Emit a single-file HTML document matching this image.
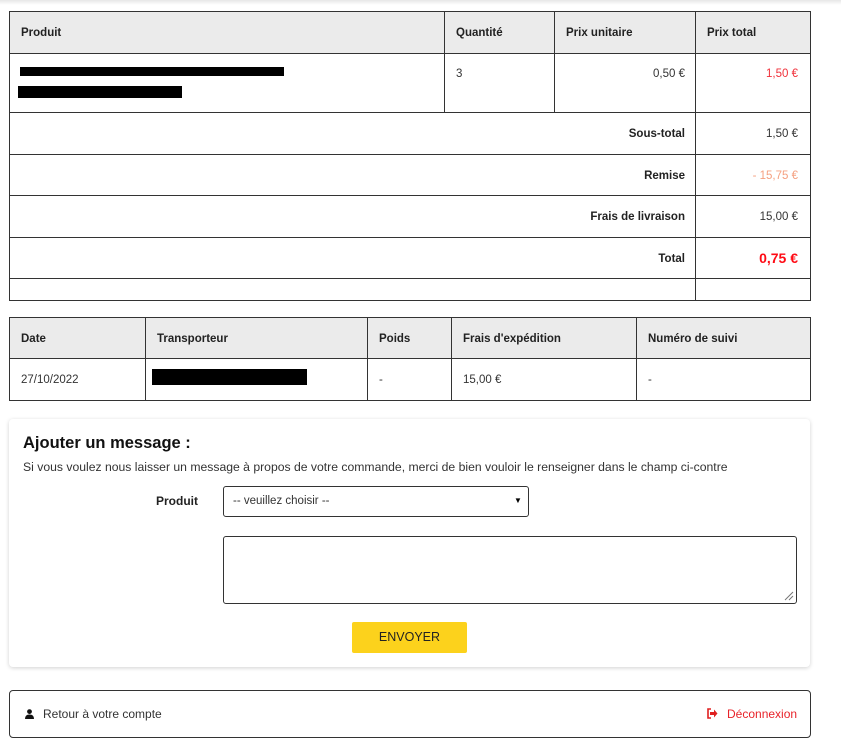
<!DOCTYPE html>
<html><head><meta charset="utf-8"><style>
*{box-sizing:border-box;margin:0;padding:0}
body{width:841px;height:750px;background:#fff;font-family:"Liberation Sans",Arial,sans-serif;font-size:11.5px;color:#333;position:relative;overflow:hidden}
.a{position:absolute}
.b{border:1px solid #333}
.hd{background:#ebebeb}
.bold{font-weight:bold;color:#222}
.vl{position:absolute;width:1px;background:#333}
.hl{position:absolute;height:1px;background:#333}
.blk{position:absolute;background:#000}
.t{margin-top:2px}
</style></head><body>
<div class="a" style="left:0;top:0;width:841px;height:5px;background:linear-gradient(#e6e6e6,#fff)"></div>

<div class="a b" style="left:9px;top:11px;width:802px;height:290px"></div>
<div class="a hd" style="left:10px;top:12px;width:800px;height:41px"></div>
<div class="hl" style="left:9px;top:53px;width:802px"></div>
<div class="hl" style="left:9px;top:112px;width:802px"></div>
<div class="hl" style="left:9px;top:154px;width:802px"></div>
<div class="hl" style="left:9px;top:195px;width:802px"></div>
<div class="hl" style="left:9px;top:237px;width:802px"></div>
<div class="hl" style="left:9px;top:278px;width:802px"></div>
<div class="vl" style="left:444px;top:11px;height:102px"></div>
<div class="vl" style="left:554px;top:11px;height:102px"></div>
<div class="vl" style="left:695px;top:11px;height:290px"></div>
<div class="a bold" style="left:21px;top:27px">Produit</div>
<div class="a bold" style="left:456px;top:27px">Quantité</div>
<div class="a bold" style="left:566px;top:27px">Prix unitaire</div>
<div class="a bold" style="left:707px;top:27px">Prix total</div>
<div class="blk" style="left:20px;top:67px;width:264px;height:9px"></div>
<div class="blk" style="left:18px;top:86px;width:164px;height:12px"></div>
<div class="a" style="left:456px;top:68px">3</div>
<div class="a" style="left:560px;top:68px;width:125px;text-align:right">0,50 €</div>
<div class="a" style="left:700px;top:68px;width:98px;text-align:right;color:#f0303a">1,50 €</div>
<div class="a bold" style="left:400px;top:128px;width:285px;text-align:right">Sous-total</div>
<div class="a" style="left:700px;top:128px;width:98px;text-align:right">1,50 €</div>
<div class="a bold" style="left:400px;top:170px;width:285px;text-align:right">Remise</div>
<div class="a" style="left:700px;top:170px;width:98px;text-align:right;color:#f5a080">- 15,75 €</div>
<div class="a bold" style="left:400px;top:211px;width:285px;text-align:right">Frais de livraison</div>
<div class="a" style="left:700px;top:211px;width:98px;text-align:right">15,00 €</div>
<div class="a bold" style="left:400px;top:253px;width:285px;text-align:right">Total</div>
<div class="a" style="left:700px;top:250px;width:98px;text-align:right;color:#ff0a14;font-weight:bold;font-size:14px">0,75 €</div>

<div class="a b" style="left:9px;top:317px;width:802px;height:84px"></div>
<div class="a hd" style="left:10px;top:318px;width:800px;height:40px"></div>
<div class="hl" style="left:9px;top:358px;width:802px"></div>
<div class="vl" style="left:145px;top:317px;height:84px"></div>
<div class="vl" style="left:367px;top:317px;height:84px"></div>
<div class="vl" style="left:451px;top:317px;height:84px"></div>
<div class="vl" style="left:636px;top:317px;height:84px"></div>
<div class="a bold" style="left:21px;top:333px">Date</div>
<div class="a bold" style="left:157px;top:333px">Transporteur</div>
<div class="a bold" style="left:379px;top:333px">Poids</div>
<div class="a bold" style="left:463px;top:333px">Frais d'expédition</div>
<div class="a bold" style="left:648px;top:333px">Numéro de suivi</div>
<div class="a" style="left:21px;top:374px">27/10/2022</div>
<div class="blk" style="left:152px;top:369px;width:155px;height:16px"></div>
<div class="a" style="left:379px;top:374px">-</div>
<div class="a" style="left:463px;top:374px">15,00 €</div>
<div class="a" style="left:648px;top:374px">-</div>

<div class="a" style="left:9px;top:419px;width:801px;height:248px;border-radius:4px;box-shadow:0 1px 4px rgba(0,0,0,.18);background:#fff"></div>
<div class="a" style="left:23px;top:434px;font-size:16.5px;font-weight:bold;color:#111">Ajouter un message :</div>
<div class="a" style="left:23px;top:460px;font-size:12.2px;color:#333;white-space:nowrap">Si vous voulez nous laisser un message à propos de votre commande, merci de bien vouloir le renseigner dans le champ ci-contre</div>
<div class="a bold" style="left:156px;top:494px;font-size:12px">Produit</div>
<div class="a" style="left:223px;top:486px;width:306px;height:31px;border:1px solid #333;border-radius:3px"></div>
<div class="a" style="left:233px;top:495px">-- veuillez choisir --</div>
<div class="a" style="left:514px;top:496px;font-size:8px;color:#000">▼</div>
<div class="a" style="left:223px;top:536px;width:574px;height:68px;border:1px solid #333;border-radius:3px"></div>
<svg class="a" style="left:783px;top:590px" width="12" height="12"><path d="M2 10L10 2M6 10L10 6" stroke="#777" stroke-width="1"/></svg>
<div class="a" style="left:352px;top:622px;width:115px;height:31px;background:#fcd21c;border-radius:2px;text-align:center;line-height:31px;font-size:12.5px;color:#222">ENVOYER</div>

<div class="a" style="left:9px;top:690px;width:802px;height:48px;border:1px solid #333;border-radius:4px"></div>
<svg class="a" style="left:25px;top:709px" width="9" height="10"><circle cx="4.5" cy="2.6" r="2.4" fill="#111"/><path d="M0 10Q0 5.5 4.5 5.5Q9 5.5 9 10Z" fill="#111"/></svg>
<div class="a" style="left:43px;top:707px;font-size:12px;color:#333">Retour à votre compte</div>
<svg class="a" style="left:706px;top:708px" width="12" height="11"><path d="M5 1H2v9h3" stroke="#e02020" stroke-width="1.6" fill="none"/><path d="M4 4h4V1.5L11.5 5.5 8 9.5V7H4z" fill="#e02020"/></svg>
<div class="a" style="left:727px;top:707px;font-size:12px;color:#e8232a">Déconnexion</div>
</body></html>
